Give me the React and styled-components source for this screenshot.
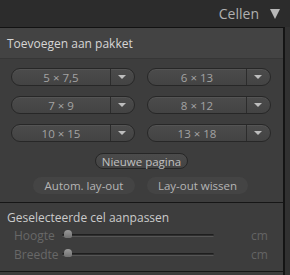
import React from 'react'
import styled, { createGlobalStyle } from 'styled-components'

const Global = createGlobalStyle`
  html, body {
    margin: 0;
    padding: 0;
    background: #2c2c2c;
  }
  * { box-sizing: border-box; }
`;

const Frame = styled.div`
  width: 290px;
  height: 275px;
  overflow: hidden;
  background: #2c2c2c;
  font-family: 'Open Sans', 'DejaVu Sans', sans-serif;
  display: flex;
  flex-direction: column;
`;

const TopBar = styled.div`
  height: 27px;
  flex: none;
  display: flex;
  align-items: center;
  justify-content: flex-end;
  gap: 11px;
  padding-right: 10px;
  color: #b0b0b0;
  font-size: 14px;
`;

const Arrow = styled.span`
  width: 0;
  height: 0;
  border-left: 5px solid transparent;
  border-right: 5px solid transparent;
  border-top: 10px solid #b8b8b8;
`;

const Body = styled.div`
  flex: 1;
  display: flex;
`;

const Panel = styled.div`
  width: 285px;
  background: #3d3d3d;
  border-top: 1px solid #121212;
  border-right: 2px solid #141414;
  display: flex;
  flex-direction: column;
`;

const Gutter = styled.div`
  flex: 1;
  background: #313131;
`;

const SectionTitle = styled.div`
  height: 31px;
  background: #434343;
  border-bottom: 1px solid #363636;
  color: #d6d6d6;
  font-size: 12px;
  padding-left: 7px;
  display: flex;
  align-items: center;
`;

const Grid = styled.div`
  display: grid;
  grid-template-columns: 124px 124px;
  column-gap: 12px;
  row-gap: 10px;
  padding: 9px 0 0 11px;
`;

const Drop = styled.div`
  height: 18px;
  display: flex;
  border: 1px solid #272727;
  border-radius: 9px;
  background: linear-gradient(#4b4b4b, #434343);
  box-shadow: inset 0 1px 0 rgba(255,255,255,0.05);
  overflow: hidden;
`;

const DropLabel = styled.div`
  flex: 1;
  display: flex;
  align-items: center;
  justify-content: center;
  color: #a3a3a3;
  font-size: 11.5px;
  border-right: 1px solid #2c2c2c;
`;

const DropBtn = styled.div`
  width: 23px;
  display: flex;
  align-items: center;
  justify-content: center;
  &::after {
    content: "";
    border-left: 4px solid transparent;
    border-right: 4px solid transparent;
    border-top: 4px solid #bdbdbd;
    margin-right: 2px;
  }
`;

const Center = styled.div`
  display: flex;
  justify-content: center;
  padding-top: 11px;
`;

const PillButton = styled.div`
  height: 16px;
  padding: 0 6px;
  border: 1px solid #262626;
  border-radius: 8px;
  background: linear-gradient(#4b4b4b, #444);
  color: #c0c0c0;
  font-size: 11.5px;
  display: flex;
  align-items: center;
`;

const FlatRow = styled.div`
  display: grid;
  grid-template-columns: 102px 101px;
  column-gap: 12px;
  padding: 8px 0 0 33px;
`;

const FlatButton = styled.div`
  height: 17px;
  border-radius: 9px;
  background: #444444;
  color: #b5b5b5;
  font-size: 11.5px;
  display: flex;
  align-items: center;
  justify-content: center;
`;

const Divider = styled.div`
  height: 1px;
  background: #161616;
  margin-top: 8px;
`;

const Section = styled.div`
  padding: 6px 0 0 7px;
`;

const SubTitle = styled.div`
  color: #cbcbcb;
  font-size: 12px;
  height: 17px;
  display: flex;
  align-items: center;
`;

const SliderRow = styled.div`
  height: 19px;
  display: flex;
  align-items: center;
  color: #686868;
  font-size: 12px;
`;

const SliderLabel = styled.div`
  width: 55px;
  padding-left: 7px;
`;

const Track = styled.div`
  position: relative;
  width: 152px;
  height: 3px;
  border-top: 1px solid #1e1e1e;
  border-bottom: 1px solid #555;
  background: #2e2e2e;
  border-radius: 2px;
`;

const Thumb = styled.div`
  position: absolute;
  left: 2px;
  top: -5px;
  width: 8px;
  height: 8px;
  background: linear-gradient(#9a9a9a, #707070);
  border-radius: 4px 4px 2px 2px;
`;

const Unit = styled.div`
  margin-left: 37px;
  color: #646464;
`;

const BottomLine = styled.div`
  margin-top: auto;
  height: 1px;
  background: #161616;
  margin-bottom: 3px;
`;

const sizes = ['5 × 7,5', '6 × 13', '7 × 9', '8 × 12', '10 × 15', '13 × 18'];

const Slider = ({ label }) => (
  <SliderRow>
    <SliderLabel>{label}</SliderLabel>
    <Track><Thumb /></Track>
    <Unit>cm</Unit>
  </SliderRow>
);

export default function App() {
  return (
    <Frame>
      <Global />
      <TopBar>
        <span>Cellen</span>
        <Arrow />
      </TopBar>
      <Body>
        <Panel>
          <SectionTitle>Toevoegen aan pakket</SectionTitle>
          <Grid>
            {sizes.map(s => (
              <Drop key={s}>
                <DropLabel>{s}</DropLabel>
                <DropBtn />
              </Drop>
            ))}
          </Grid>
          <Center>
            <PillButton>Nieuwe pagina</PillButton>
          </Center>
          <FlatRow>
            <FlatButton>Autom. lay-out</FlatButton>
            <FlatButton>Lay-out wissen</FlatButton>
          </FlatRow>
          <Divider />
          <Section>
            <SubTitle>Geselecteerde cel aanpassen</SubTitle>
            <Slider label="Hoogte" />
            <Slider label="Breedte" />
          </Section>
          <BottomLine />
        </Panel>
        <Gutter />
      </Body>
    </Frame>
  )
}
